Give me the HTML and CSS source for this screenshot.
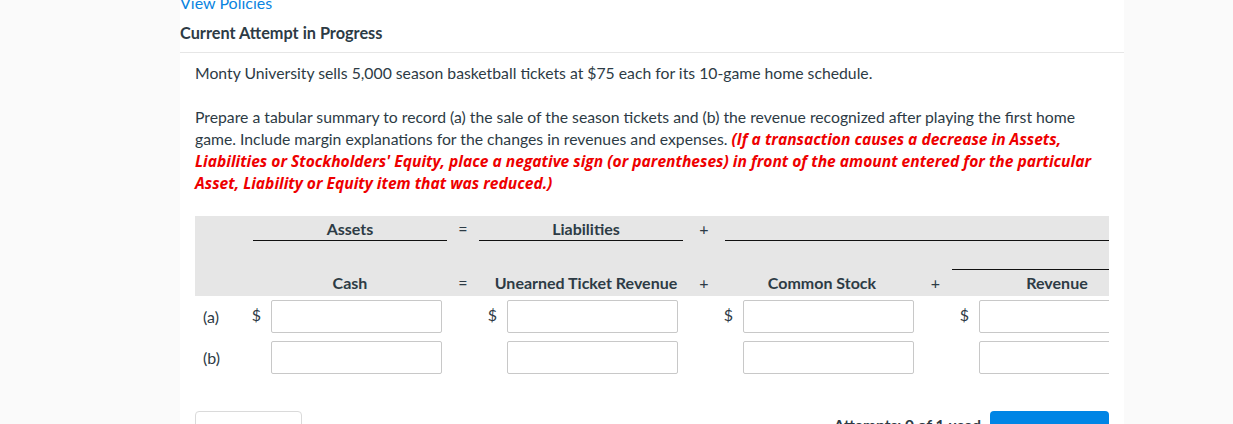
FILE: index.html
```html
<!DOCTYPE html>
<html lang="en">
<head>
<meta charset="utf-8">
<title>Current Attempt in Progress</title>
<link rel="stylesheet" href="styles.css">
</head>
<body>
<div class="panel">
  <div class="top">
    <a class="policies" href="#">View Policies</a>
    <h2 class="attempt-title">Current Attempt in Progress</h2>
  </div>
  <div class="question">
    <p class="qtext">Monty University sells 5,000 season basketball tickets at $75 each for its 10-game home schedule.</p>
    <p class="qtext">Prepare a tabular summary to record (a) the sale of the season tickets and (b) the revenue recognized after playing the first home game. Include margin explanations for the changes in revenues and expenses. <strong class="warn">(If a transaction causes a decrease in Assets, Liabilities or Stockholders' Equity, place a negative sign (or parentheses) in front of the amount entered for the particular Asset, Liability or Equity item that was reduced.)</strong></p>

    <div class="table-clip">
      <div class="grid hdr">
        <div class="c lbl"></div>
        <div class="c h under">Assets</div>
        <div class="c op">=</div>
        <div class="c h under shift">Liabilities</div>
        <div class="c op">+</div>
        <div class="c h under span3"></div>

        <div class="c lbl"></div>
        <div class="c"></div>
        <div class="c"></div>
        <div class="c"></div>
        <div class="c"></div>
        <div class="c"></div>
        <div class="c"></div>
        <div class="c"></div>

        <div class="c lbl"></div>
        <div class="c h">Cash</div>
        <div class="c op">=</div>
        <div class="c h shift">Unearned Ticket Revenue</div>
        <div class="c op">+</div>
        <div class="c h">Common Stock</div>
        <div class="c op">+</div>
        <div class="c h topline">Revenue</div>
      </div>

      <div class="grid row">
        <div class="c lbl">(a)</div>
        <div class="c val"><span class="cur">$</span><input class="inp" type="text"></div>
        <div class="c"></div>
        <div class="c val"><span class="cur">$</span><input class="inp" type="text"></div>
        <div class="c"></div>
        <div class="c val"><span class="cur">$</span><input class="inp" type="text"></div>
        <div class="c"></div>
        <div class="c val last"><span class="cur">$</span><input class="inp" type="text"></div>
      </div>
      <div class="grid row">
        <div class="c lbl">(b)</div>
        <div class="c val"><input class="inp" type="text"></div>
        <div class="c"></div>
        <div class="c val"><input class="inp" type="text"></div>
        <div class="c"></div>
        <div class="c val"><input class="inp" type="text"></div>
        <div class="c"></div>
        <div class="c val last"><input class="inp" type="text"></div>
      </div>
    </div>

    <div class="actions">
      <button class="btn-outline" type="button">Save for Later</button>
      <span class="spacer"></span>
      <span class="attempts">Attempts: 0 of 1 used</span>
      <button class="btn-primary" type="button">Submit Answer</button>
    </div>
  </div>
</div>
</body>
</html>
```

FILE: styles.css
```css
html, body {
  margin: 0;
  padding: 0;
  height: 100%;
  overflow: hidden;
}
body {
  background: #fafafa;
  font-family: Lato, "Noto Sans", sans-serif;
  color: #2d3b45;
}
.panel {
  margin-left: 180px;
  width: 944px;
  min-height: 100%;
  background: #fff;
  display: flow-root;
}
.top {
  display: flow-root;
  border-bottom: 1px solid #e6e6e6;
  height: 53px;
  box-sizing: border-box;
}
.policies {
  display: block;
  color: #0a84e0;
  text-decoration: none;
  font-size: 16px;
  line-height: 20px;
  margin-top: -7px;
  height: 20px;
}
.attempt-title {
  margin: 10px 0 0 0;
  font-size: 16.3px;
  line-height: 20px;
  font-weight: 700;
  color: #2d3b45;
}
.question {
  padding: 9px 15px 0 15px;
}
.qtext {
  margin: 0 0 22px 0;
  font-size: 15.75px;
  line-height: 22px;
}
.warn {
  color: #ee0000;
  font-family: "Open Sans", Lato, sans-serif;
  font-size: 15.6px;
  line-height: 14px;
  font-style: italic;
  font-weight: 700;
}
.table-clip {
  width: 914px;
  overflow: hidden;
}
.grid {
  display: grid;
  grid-template-columns: 58px 194px 32px 204px 42px 194px 33px 210px;
  width: 967px;
}
.hdr {
  background: #e6e6e6;
  grid-template-rows: 25px 28px 27px;
}
.c {
  display: flex;
  align-items: center;
  justify-content: center;
  font-size: 16px;
  box-sizing: border-box;
}
.h {
  font-weight: 700;
}
.shift {
  padding-left: 10px;
}
.under {
  border-bottom: 1px solid #111;
}
.span3 {
  grid-column: 6 / span 3;
}
.topline {
  border-top: 1px solid #111;
  padding-bottom: 1px;
}
.lbl {
  justify-content: flex-start;
  padding-left: 8px;
}
.row {
  grid-template-rows: 41px;
}
.val {
  justify-content: flex-end;
  padding-right: 5px;
}
.val.last {
  padding-right: 12px;
}
.cur {
  margin-right: 10px;
  margin-top: -4px;
}
.inp {
  width: 171px;
  height: 33px;
  box-sizing: border-box;
  border: 1px solid #c8c8c8;
  border-radius: 2px;
  background: #fff;
  margin: 0;
  padding: 0 6px;
  font-family: inherit;
}
.actions {
  display: flex;
  align-items: flex-start;
  margin-top: 33px;
}
.spacer {
  flex: 1;
}
.btn-outline {
  width: 107px;
  height: 40px;
  border: 1px solid #dadada;
  border-radius: 4px;
  background: #fff;
  color: #2d3b45;
  font-family: inherit;
  font-size: 15px;
  white-space: nowrap;
  padding: 0;
}
.attempts {
  font-size: 15.5px;
  font-weight: 700;
  margin-top: 5px;
  margin-right: 9px;
}
.btn-primary {
  width: 119px;
  height: 40px;
  border: none;
  border-radius: 4px;
  background: #0085e5;
  color: #fff;
  font-family: inherit;
  font-size: 15px;
  font-weight: 700;
  white-space: nowrap;
  padding: 0;
}
```
